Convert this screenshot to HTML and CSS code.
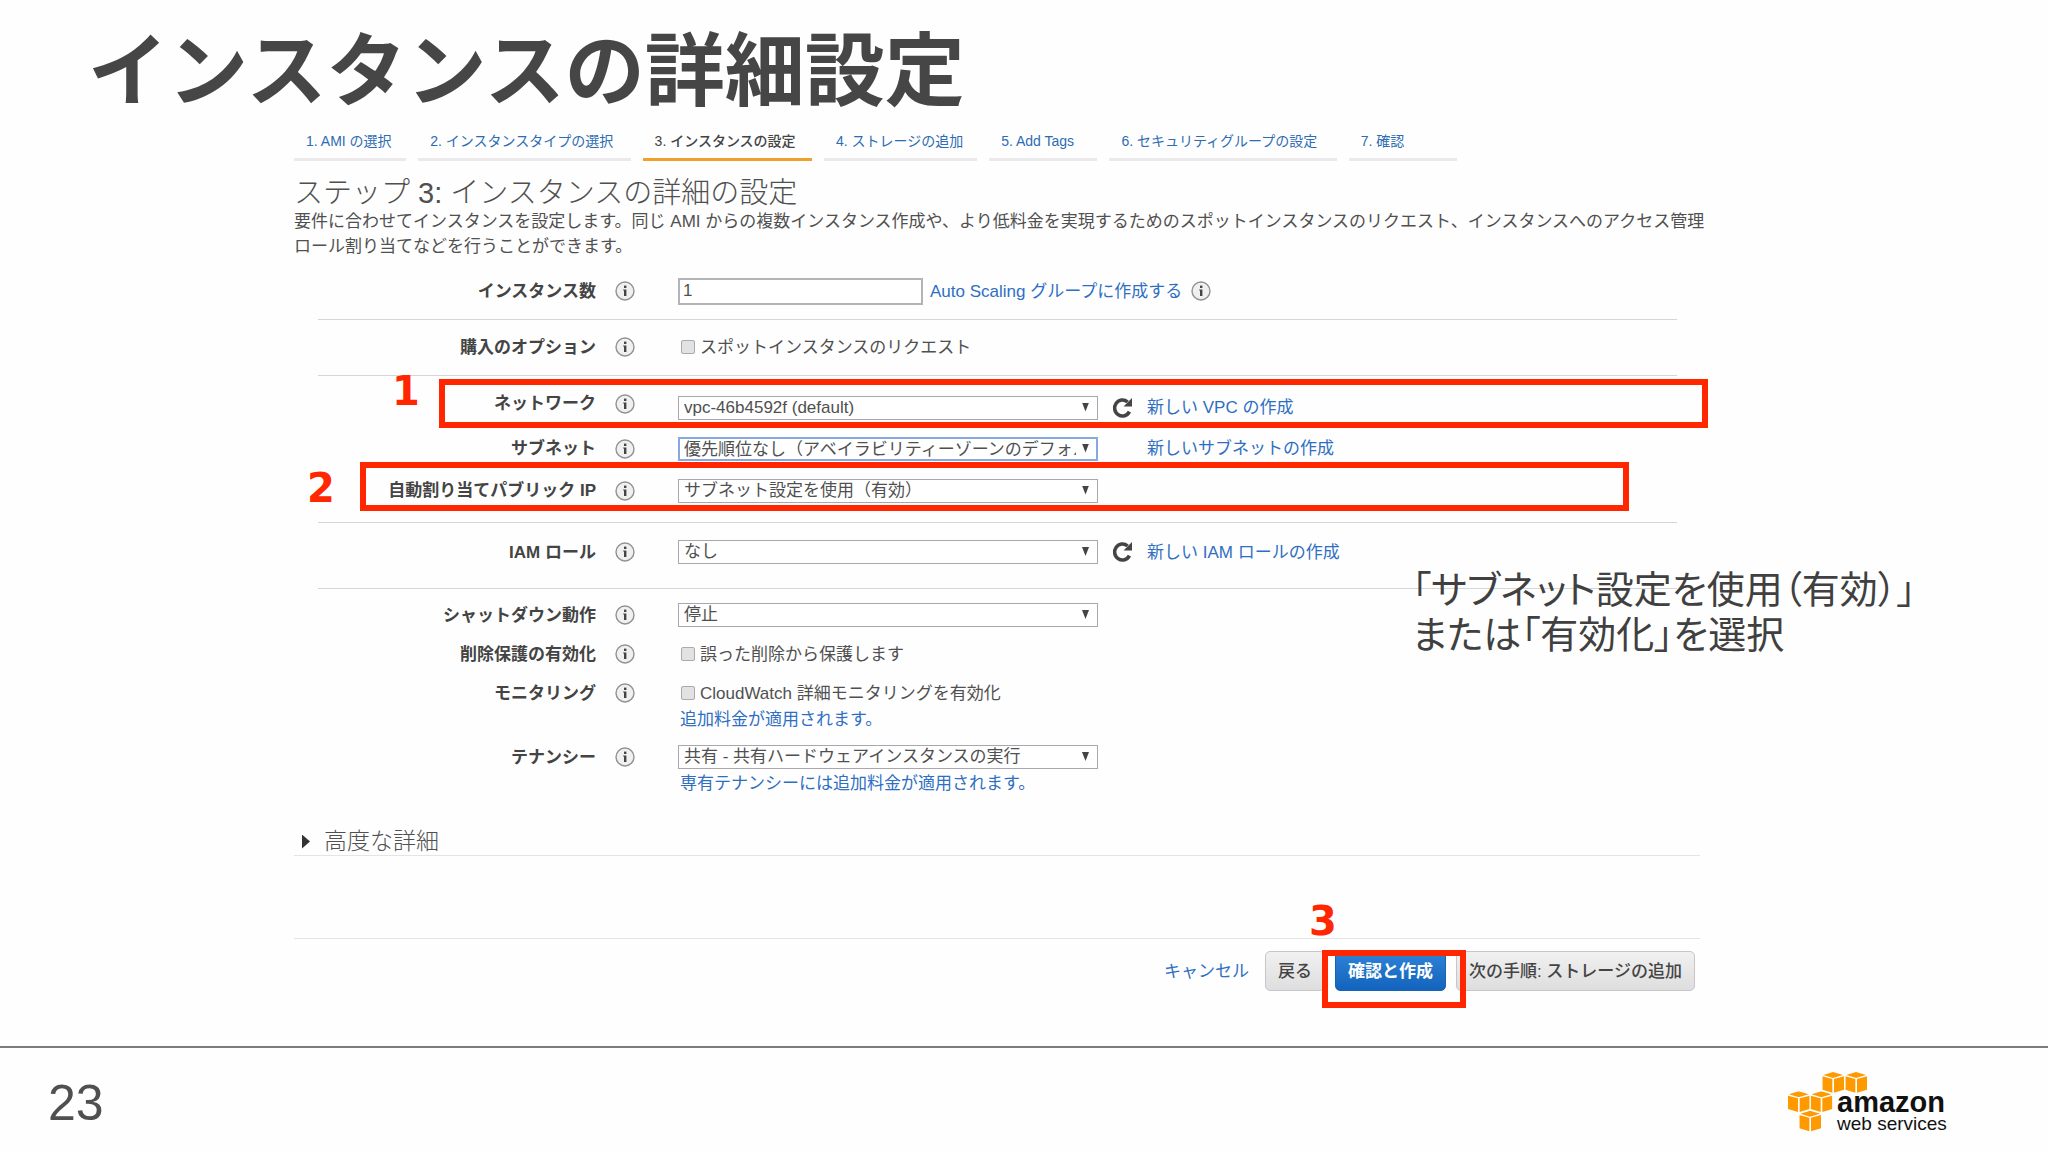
FILE: index.html
```html
<!DOCTYPE html>
<html lang="ja">
<head>
<meta charset="utf-8">
<meta name="viewport" content="width=device-width, initial-scale=1">
<title>インスタンスの詳細設定</title>
<link rel="stylesheet" href="styles.css">
</head>
<body>
<svg class="sprite" aria-hidden="true">
  <symbol id="info" viewBox="0 0 20 20">
    <circle cx="10" cy="10" r="9" fill="#f0f0f0" stroke="#929292" stroke-width="1.4"/>
    <rect x="9" y="4.6" width="2.4" height="2.4" fill="#444"/>
    <path d="M8.2 8.4h3.2v6.6H9V9.6h-.8z" fill="#444"/>
  </symbol>
  <symbol id="refresh" viewBox="0 0 22 22">
    <path d="M16.6 5A7.8 8 0 1 0 18.4 14.6" fill="none" stroke="#444" stroke-width="3.6"/>
    <path d="M21 1v8.6h-8.4z" fill="#444"/>
  </symbol>
  <symbol id="cube" viewBox="0 0 65 63">
    <path d="M3 9 32 0 62 9 32 18z"/>
    <path d="M0 13 30 21V62L0 53z"/>
    <path d="M65 13 35 21V62L65 53z"/>
  </symbol>
</svg>

<main class="slide">
  <h1 class="slide-title">インスタンスの詳細設定</h1>

  <section class="wizard">
    <nav class="tabs">
      <a class="tab" href="#">1. AMI の選択</a>
      <a class="tab" href="#">2. インスタンスタイプの選択</a>
      <a class="tab tab-current" href="#" aria-current="step">3. インスタンスの設定</a>
      <a class="tab" href="#">4. ストレージの追加</a>
      <a class="tab" href="#">5. Add Tags</a>
      <a class="tab" href="#">6. セキュリティグループの設定</a>
      <a class="tab" href="#">7. 確認</a>
    </nav>

    <h2 class="step-title">ステップ 3: インスタンスの詳細の設定</h2>
    <p class="step-text">要件に合わせてインスタンスを設定します。同じ AMI からの複数インスタンス作成や、より低料金を実現するためのスポットインスタンスのリクエスト、インスタンスへのアクセス管理<br>ロール割り当てなどを行うことができます。</p>

    <form class="form">
      <div class="group group-count">
        <div class="row">
          <label class="label" for="count">インスタンス数</label>
          <svg class="info"><use href="#info"/></svg>
          <div class="field">
            <input class="text" id="count" type="text" value="1">
            <a class="link link-inline" href="#">Auto Scaling グループに作成する</a>
            <svg class="info info-inline"><use href="#info"/></svg>
          </div>
        </div>
      </div>

      <div class="group group-purchase">
        <div class="row">
          <span class="label">購入のオプション</span>
          <svg class="info"><use href="#info"/></svg>
          <div class="field">
            <input class="check" id="spot" type="checkbox">
            <label for="spot">スポットインスタンスのリクエスト</label>
          </div>
        </div>
      </div>

      <div class="group group-network">
        <div class="row row-marked">
          <span class="number number-one">1</span>
          <span class="mark mark-network"></span>
          <label class="label" for="network">ネットワーク</label>
          <svg class="info"><use href="#info"/></svg>
          <div class="field field-low">
            <span class="select"><select id="network"><option>vpc-46b4592f (default)</option></select></span>
            <svg class="refresh"><use href="#refresh"/></svg>
            <a class="link" href="#">新しい VPC の作成</a>
          </div>
        </div>
        <div class="row row-subnet">
          <label class="label" for="subnet">サブネット</label>
          <svg class="info"><use href="#info"/></svg>
          <div class="field">
            <span class="select select-active"><select id="subnet"><option>優先順位なし（アベイラビリティーゾーンのデフォルト）</option></select></span>
            <a class="link link-far" href="#">新しいサブネットの作成</a>
          </div>
        </div>
        <div class="row row-marked row-publicip">
          <span class="number number-two">2</span>
          <span class="mark mark-publicip"></span>
          <label class="label" for="publicip">自動割り当てパブリック IP</label>
          <svg class="info"><use href="#info"/></svg>
          <div class="field">
            <span class="select"><select id="publicip"><option>サブネット設定を使用（有効）</option></select></span>
          </div>
        </div>
      </div>

      <div class="group group-iam">
        <div class="row">
          <label class="label" for="iam">IAM ロール</label>
          <svg class="info"><use href="#info"/></svg>
          <div class="field">
            <span class="select"><select id="iam"><option>なし</option></select></span>
            <svg class="refresh"><use href="#refresh"/></svg>
            <a class="link" href="#">新しい IAM ロールの作成</a>
          </div>
        </div>
      </div>

      <div class="group group-behavior">
        <p class="hint">「サブネット設定を使用（有効）」<br>または「有効化」を選択</p>
        <div class="row">
          <label class="label" for="shutdown">シャットダウン動作</label>
          <svg class="info"><use href="#info"/></svg>
          <div class="field">
            <span class="select"><select id="shutdown"><option>停止</option></select></span>
          </div>
        </div>
        <div class="row">
          <span class="label">削除保護の有効化</span>
          <svg class="info"><use href="#info"/></svg>
          <div class="field">
            <input class="check" id="protect" type="checkbox">
            <label for="protect">誤った削除から保護します</label>
          </div>
        </div>
        <div class="row">
          <span class="label">モニタリング</span>
          <svg class="info"><use href="#info"/></svg>
          <div class="field">
            <input class="check" id="monitor" type="checkbox">
            <label for="monitor">CloudWatch 詳細モニタリングを有効化</label>
          </div>
          <a class="link note" href="#">追加料金が適用されます。</a>
        </div>
        <div class="row">
          <label class="label" for="tenancy">テナンシー</label>
          <svg class="info"><use href="#info"/></svg>
          <div class="field">
            <span class="select"><select id="tenancy"><option>共有 - 共有ハードウェアインスタンスの実行</option></select></span>
          </div>
          <a class="link note" href="#">専有テナンシーには追加料金が適用されます。</a>
        </div>
      </div>
    </form>

    <details class="advanced">
      <summary>高度な詳細</summary>
    </details>

    <div class="actions">
      <a class="link cancel" href="#">キャンセル</a>
      <button class="button" type="button">戻る</button>
      <span class="primary-wrap">
        <button class="button button-primary" type="button">確認と作成</button>
        <span class="number number-three">3</span>
        <span class="mark mark-primary"></span>
      </span>
      <button class="button" type="button">次の手順: ストレージの追加</button>
    </div>
  </section>
</main>

<footer class="footer">
  <span class="page-number">23</span>
  <div class="logo">
    <svg class="cubes" viewBox="0 0 240 180" fill="#f90" aria-hidden="true">
      <use href="#cube" x="103" y="0" width="65" height="63"/>
      <use href="#cube" x="172" y="0" width="65" height="63"/>
      <use href="#cube" x="0" y="58" width="65" height="63"/>
      <use href="#cube" x="68" y="58" width="65" height="63"/>
      <use href="#cube" x="34" y="116" width="65" height="63"/>
    </svg>
    <div class="wordmark">
      <span class="word-top">amazon</span>
      <span class="word-bottom">web services</span>
    </div>
  </div>
</footer>
</body>
</html>
```
FILE: styles.css
```css
* {
  box-sizing: border-box;
}

body {
  display: flex;
  flex-direction: column;
  min-height: 100vh;
  margin: 0;
  background: #fefefe;
  color: #505050;
  font-family: "Liberation Sans", "Noto Sans CJK JP", sans-serif;
  font-size: 17px;
  line-height: 25px;
}

h1,
h2,
p {
  margin: 0;
}

.sprite {
  position: absolute;
  width: 0;
  height: 0;
}

.slide {
  flex: 1;
}

.slide-title {
  padding: 24px 88px 0;
  color: #464646;
  font-family: "Noto Sans CJK JP", sans-serif;
  font-size: 80px;
  font-weight: 700;
  line-height: 80px;
}

.wizard {
  padding: 21px 348px 54px 294px;
}

/* Wizard steps */
.tabs {
  display: grid;
  grid-template-columns: 112fr 212fr 169fr 153fr 108fr 227fr 108fr;
  gap: 12px;
  max-width: 1163px;
}

.tab {
  padding: 0 12px;
  border-bottom: 3px solid #ece9ec;
  color: #2c6cb4;
  font-size: 14px;
  line-height: 33px;
  text-decoration: none;
  white-space: nowrap;
}

.tab-current {
  border-color: #f0a02c;
  color: #444;
  font-weight: 500;
}

.step-title {
  margin-top: 16px;
  font-size: 29px;
  font-weight: 300;
  line-height: 32px;
}

.step-text {
  white-space: nowrap;
}

/* Form */
.form {
  padding: 0 23px 0 24px;
}

.group {
  border-bottom: 1px solid #d4d6d8;
}

.group-count {
  padding: 18px 0 14px;
}

.group-purchase {
  padding: 13px 0 14px;
}

.group-network {
  padding: 3px 0 11px;
}

.group-iam {
  padding: 15px 0 22px;
}

.group-behavior {
  position: relative;
  display: grid;
  gap: 11px;
  padding-top: 12px;
  border-bottom: 0;
}

.row {
  display: grid;
  grid-template-columns: 278px 82px 1fr;
  grid-template-rows: minmax(28px, auto);
  align-items: center;
}

.row-marked {
  position: relative;
  min-height: 49px;
}

.row-subnet {
  min-height: 34px;
  padding-top: 8px;
  grid-template-rows: 25px;
}

.row-publicip {
  padding-top: 8px;
}

.label {
  color: #444;
  font-weight: 700;
  text-align: right;
}

.info {
  width: 20px;
  height: 20px;
  margin-left: 19px;
}

.info-inline {
  margin-left: 9px;
}

.field {
  display: flex;
  align-items: center;
}

.field-low {
  padding-top: 8px;
}

.text {
  width: 245px;
  height: 27px;
  padding: 0 3px;
  border: 2px solid #b4b4b8;
  background: #fff;
  color: #505050;
  font: inherit;
}

.select {
  position: relative;
  width: 420px;
}

.select::after {
  position: absolute;
  top: 7px;
  right: 9px;
  width: 7px;
  height: 9px;
  background: #444;
  clip-path: polygon(0 0, 100% 0, 50% 100%);
  content: "";
  pointer-events: none;
}

.select select {
  display: block;
  width: 100%;
  height: 24px;
  padding: 0 20px 0 5px;
  border: 1px solid #a9a6ad;
  border-radius: 0;
  appearance: none;
  background: #fff;
  color: #505050;
  font: inherit;
  line-height: 22px;
}

.select-active select {
  border: 2px solid #86aae0;
  padding-left: 4px;
}

.check {
  width: 14px;
  height: 14px;
  margin: 0 5px 0 3px;
  border: 1px solid #aaa;
  border-radius: 2px;
  appearance: none;
  background: #e2e2e2;
}

.refresh {
  width: 22px;
  height: 22px;
  margin: 0 14px 0 13px;
}

.link {
  color: #2f6fc2;
  text-decoration: none;
}

.link-inline {
  margin-left: 7px;
}

.link-far {
  margin-left: 49px;
}

.note {
  grid-column: 3;
  margin-left: 2px;
}

/* Callouts drawn over the form */
.mark {
  position: absolute;
  border: 6px solid #ff2600;
  pointer-events: none;
}

.mark-network {
  top: 0;
  right: -31px;
  bottom: 0;
  left: 121px;
}

.mark-publicip {
  top: 0;
  right: 48px;
  bottom: 0;
  left: 42px;
}

.mark-primary {
  top: -1px;
  right: -20px;
  bottom: -17px;
  left: -13px;
}

.number {
  position: absolute;
  color: #ff2600;
  font-family: "DejaVu Sans", sans-serif;
  font-size: 40px;
  font-weight: 700;
  line-height: 40px;
}

.number-one {
  top: -8px;
  left: 74px;
}

.number-two {
  top: 6px;
  left: -11px;
}

.number-three {
  top: -50px;
  left: -26px;
}

.hint {
  position: absolute;
  top: -25px;
  left: 1094px;
  color: #404040;
  font-family: "Noto Sans CJK JP", sans-serif;
  font-feature-settings: "palt";
  font-size: 38px;
  line-height: 45px;
  white-space: nowrap;
}

.advanced {
  margin-top: 32px;
  border-bottom: 1px solid #e4e4e4;
}

.advanced summary {
  display: flex;
  align-items: center;
  gap: 14px;
  padding-left: 8px;
  font-size: 23px;
  font-weight: 300;
  line-height: 27px;
}

.advanced summary::before {
  width: 8px;
  height: 14px;
  background: #333;
  clip-path: polygon(0 0, 100% 50%, 0 100%);
  content: "";
}

.actions {
  display: flex;
  align-items: center;
  justify-content: flex-end;
  gap: 10px;
  margin-top: 82px;
  padding: 12px 5px 0 0;
  border-top: 1px solid #e4e4e4;
}

.cancel {
  margin-right: 6px;
}

.primary-wrap {
  position: relative;
}

.button {
  display: block;
  height: 40px;
  padding: 0 12px;
  border: 1px solid #c8c5ca;
  border-radius: 5px;
  background: linear-gradient(#f1f1f1, #dedede);
  color: #444;
  font: inherit;
  font-weight: 500;
}

.button-primary {
  border-color: #1b62b4;
  background: linear-gradient(#2f83d6, #1263bd);
  color: #fff;
  font-weight: 700;
}

/* Footer */
.footer {
  display: flex;
  align-items: center;
  justify-content: space-between;
  min-height: 106px;
  padding: 6px 101px 0 48px;
  border-top: 2px solid #7c7c7c;
}

.page-number {
  font-size: 50px;
  line-height: 50px;
}

.logo {
  display: flex;
}

.cubes {
  width: 80px;
  height: 60px;
}

.wordmark {
  display: flex;
  flex-direction: column;
  width: 110px;
  margin: 18px 0 0 -31px;
  color: #111;
  white-space: nowrap;
}

.word-top {
  font-size: 29px;
  font-weight: 700;
  line-height: 24px;
}

.word-bottom {
  font-size: 19px;
  line-height: 20px;
}
```
